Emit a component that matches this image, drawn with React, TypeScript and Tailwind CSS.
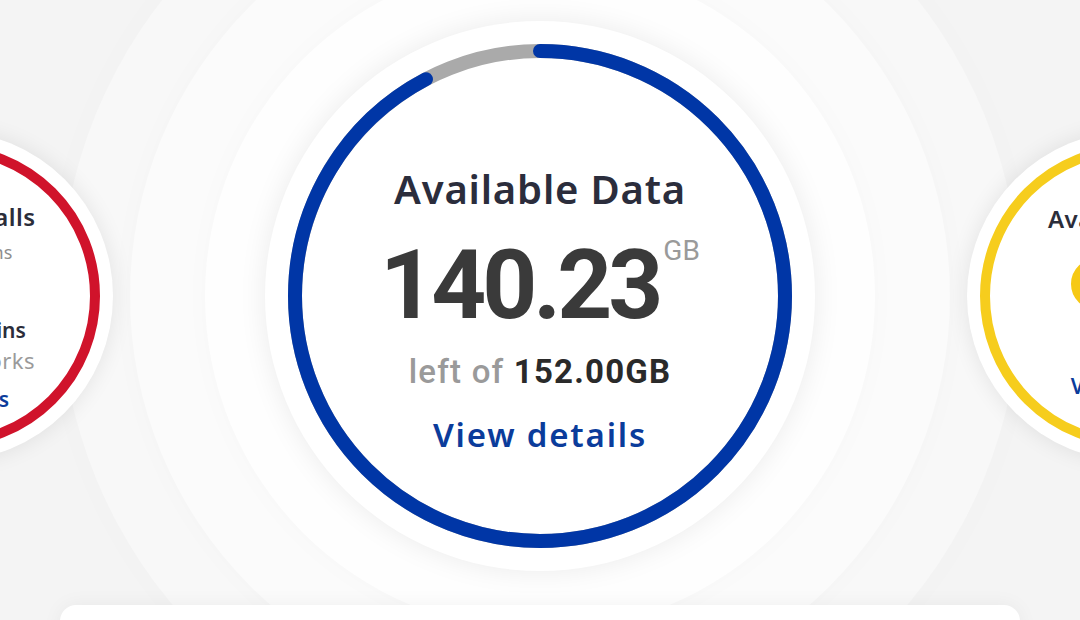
import React from "react";

const R = 245;
const C = 2 * Math.PI * R;

function CenterRing({ used }: { used: number }) {
    return (
        <svg width="550" height="550" viewBox="0 0 550 550" className="[grid-area:1/1] -rotate-90">
            <circle cx="275" cy="275" r={R} fill="none" stroke="#aaaaaa" strokeWidth="14" />
            <circle
                cx="275"
                cy="275"
                r={R}
                fill="none"
                stroke="#0036a6"
                strokeWidth="14"
                strokeLinecap="round"
                strokeDasharray={`${C * used} ${C}`}
            />
        </svg>
    );
}

function SideRing({ color }: { color: string }) {
    return (
        <svg width="330" height="330" viewBox="0 0 330 330" className="[grid-area:1/1]">
            <circle cx="165" cy="165" r="147" fill="none" stroke={color} strokeWidth="10" />
        </svg>
    );
}

export default function App() {
    const total = 152.0;
    const left = 140.23;

    return (
        <div
            className="relative h-[620px] w-[1080px] overflow-hidden bg-[#f4f4f4]"
            style={{ fontFamily: "'Noto Sans', 'Open Sans', sans-serif" }}
        >
            <div className="flex items-center justify-center gap-[152px] pt-[21px]">
                {/* Calls */}
                <div className="relative z-10 grid h-[330px] w-[330px] shrink-0 place-items-center rounded-full bg-white shadow-[0_0_22px_rgba(0,0,0,0.09)]">
                    <SideRing color="#d0132b" />
                    <div className="flex h-full w-full flex-col items-center pt-[72px] [grid-area:1/1]">
                        <p className="text-[24px] font-semibold leading-[28px] tracking-[0.5px] text-[#2b2d3a]">Available Calls</p>
                        <p className="mt-[10px] text-[18px] leading-[22px] text-[#8e8e8e]">Unlimited mins</p>
                        <p className="mt-[55px] text-[21px] font-semibold leading-[24px] text-[#2b2d3a]">Unlimited Mins</p>
                        <p className="mt-[5px] text-[22px] leading-[26px] tracking-[0.5px] text-[#9a9a9a]">On All Networks</p>
                        <p className="mt-[14px] text-[21px] font-semibold leading-[24px] text-[#0b3c9b]">View details</p>
                    </div>
                </div>

                {/* Data */}
                <div className="relative grid h-[550px] w-[550px] shrink-0 place-items-center rounded-full bg-white shadow-[0_0_28px_rgba(0,0,0,0.08),0_0_0_60px_#fefefe,0_0_30px_60px_rgba(0,0,0,0.02),0_0_0_135px_#fbfbfb,0_0_30px_135px_rgba(0,0,0,0.018),0_0_0_205px_#f8f8f8,0_0_40px_205px_rgba(0,0,0,0.015)]">
                    <CenterRing used={left / total} />
                    <div className="flex h-full w-full flex-col items-center pt-[148px] [grid-area:1/1]">
                        <p className="text-[40px] font-semibold leading-[40px] tracking-[0.8px] text-[#2b2d3c]">
                            Available Data
                        </p>
                        <div className="mt-[28px] flex items-start">
                            <span
                                className="text-[96px] font-bold leading-[96px] tracking-[-4px] text-[#3a3a3a]"
                                style={{ fontFamily: "Roboto, sans-serif" }}
                            >
                                {left.toFixed(2)}
                            </span>
                            <span
                                className="ml-[4px] text-[28px] leading-[28px] text-[#9a9a9a]"
                                style={{ fontFamily: "Roboto, sans-serif" }}
                            >
                                GB
                            </span>
                        </div>
                        <p
                            className="mt-[22px] text-[33px] leading-[33px] tracking-[1.2px]"
                            style={{ fontFamily: "Roboto, sans-serif" }}
                        >
                            <span className="font-medium text-[#9a9a9a]">left of </span>
                            <span className="font-bold text-[#2a2a2a]">{total.toFixed(2)}GB</span>
                        </p>
                        <p className="mt-[30px] text-[33px] font-semibold leading-[33px] tracking-[1.8px] text-[#0b3c9b]">
                            View details
                        </p>
                    </div>
                </div>

                {/* SMS */}
                <div className="relative z-10 grid h-[330px] w-[330px] shrink-0 place-items-center rounded-full bg-white shadow-[0_0_22px_rgba(0,0,0,0.09)]">
                    <SideRing color="#f6cd1d" />
                    <div className="flex h-full w-full flex-col items-center pt-[74px] [grid-area:1/1]">
                        <p className="text-[24px] font-semibold leading-[28px] tracking-[0.5px] text-[#2b2d3a]">Available SMS</p>
                        <svg width="130" height="56" viewBox="0 0 130 56" className="mt-[23px]">
                            <path
                                d="M65 28 C54 13 42 8 31 8 C19 8 10 17 10 28 C10 39 19 48 31 48 C42 48 54 43 65 28 C76 13 88 8 99 8 C111 8 120 17 120 28 C120 39 111 48 99 48 C88 48 76 43 65 28 Z"
                                fill="none"
                                stroke="#f6c915"
                                strokeWidth="12"
                            />
                        </svg>
                        <p className="mt-[62px] text-[21px] font-semibold leading-[24px] text-[#0b3c9b]">View details</p>
                    </div>
                </div>
            </div>

            <div className="relative z-10 mx-auto mt-[34px] h-[80px] w-[960px] rounded-2xl bg-white shadow-[0_0_20px_rgba(0,0,0,0.05)]" />
        </div>
    );
}
